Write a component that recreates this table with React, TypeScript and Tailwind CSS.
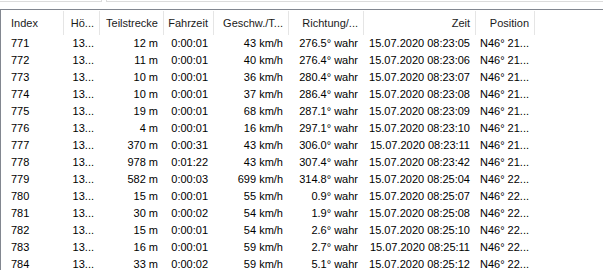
import React from "react";

const rows: string[][] = [
  ["771", "12 m", "0:00:01", "43 km/h", "276.5° wahr", "15.07.2020 08:23:05", "N46° 21..."],
  ["772", "11 m", "0:00:01", "40 km/h", "276.4° wahr", "15.07.2020 08:23:06", "N46° 21..."],
  ["773", "10 m", "0:00:01", "36 km/h", "280.4° wahr", "15.07.2020 08:23:07", "N46° 21..."],
  ["774", "10 m", "0:00:01", "37 km/h", "286.4° wahr", "15.07.2020 08:23:08", "N46° 21..."],
  ["775", "19 m", "0:00:01", "68 km/h", "287.1° wahr", "15.07.2020 08:23:09", "N46° 21..."],
  ["776", "4 m", "0:00:01", "16 km/h", "297.1° wahr", "15.07.2020 08:23:10", "N46° 21..."],
  ["777", "370 m", "0:00:31", "43 km/h", "306.0° wahr", "15.07.2020 08:23:11", "N46° 21..."],
  ["778", "978 m", "0:01:22", "43 km/h", "307.4° wahr", "15.07.2020 08:23:42", "N46° 21..."],
  ["779", "582 m", "0:00:03", "699 km/h", "314.8° wahr", "15.07.2020 08:25:04", "N46° 22..."],
  ["780", "15 m", "0:00:01", "55 km/h", "0.9° wahr", "15.07.2020 08:25:07", "N46° 22..."],
  ["781", "30 m", "0:00:02", "54 km/h", "1.9° wahr", "15.07.2020 08:25:08", "N46° 22..."],
  ["782", "15 m", "0:00:01", "54 km/h", "2.6° wahr", "15.07.2020 08:25:10", "N46° 22..."],
  ["783", "16 m", "0:00:01", "59 km/h", "2.7° wahr", "15.07.2020 08:25:11", "N46° 22..."],
  ["784", "33 m", "0:00:02", "59 km/h", "5.1° wahr", "15.07.2020 08:25:12", "N46° 22..."],
];

const grid = "grid grid-cols-[63px_36px_64px_50px_75px_75px_112px_59px]";

function H({ children, left }: { children: React.ReactNode; left?: boolean }) {
  return (
    <div
      className={
        "flex items-center h-[24px] mt-[1px] border-r border-[#e5e5e5] whitespace-nowrap overflow-hidden " +
        (left ? "justify-start pl-[10px]" : "justify-end pr-[5px]")
      }
    >
      {children}
    </div>
  );
}

function C({ children, left }: { children: React.ReactNode; left?: boolean }) {
  return (
    <div
      className={
        "flex items-center h-[17px] whitespace-nowrap overflow-hidden " +
        (left ? "justify-start pl-[10px]" : "justify-end pr-[6px]")
      }
    >
      {children}
    </div>
  );
}

export default function App() {
  return (
    <div
      className="w-[603px] h-[270px] overflow-hidden bg-white text-black text-[11px]"
      style={{ fontFamily: '"Liberation Sans", Arial, sans-serif' }}
    >
      <div className="flex h-[2px]">
        <div className="w-[102px] border-b border-r border-[#dcdcdc]" />
        <div className="w-[4px]" />
        <div className="flex-1 border-b border-l border-[#dcdcdc]" />
      </div>
      <div className="mt-[7px] border-t border-l border-[#828790] h-[261px] overflow-hidden">
        <div className={grid + " h-[25px] text-[#1a1a1a]"}>
          <H left>Index</H>
          <H>Hö...</H>
          <H>Teilstrecke</H>
          <H>Fahrzeit</H>
          <H>Geschw./T...</H>
          <H>Richtung/...</H>
          <H>Zeit</H>
          <H>Position</H>
        </div>
        {rows.map((r) => (
          <div key={r[0]} className={grid}>
            <C left>{r[0]}</C>
            <C>13...</C>
            <C>{r[1]}</C>
            <C>{r[2]}</C>
            <C>{r[3]}</C>
            <C>{r[4]}</C>
            <C>{r[5]}</C>
            <C>{r[6]}</C>
          </div>
        ))}
      </div>
    </div>
  );
}
